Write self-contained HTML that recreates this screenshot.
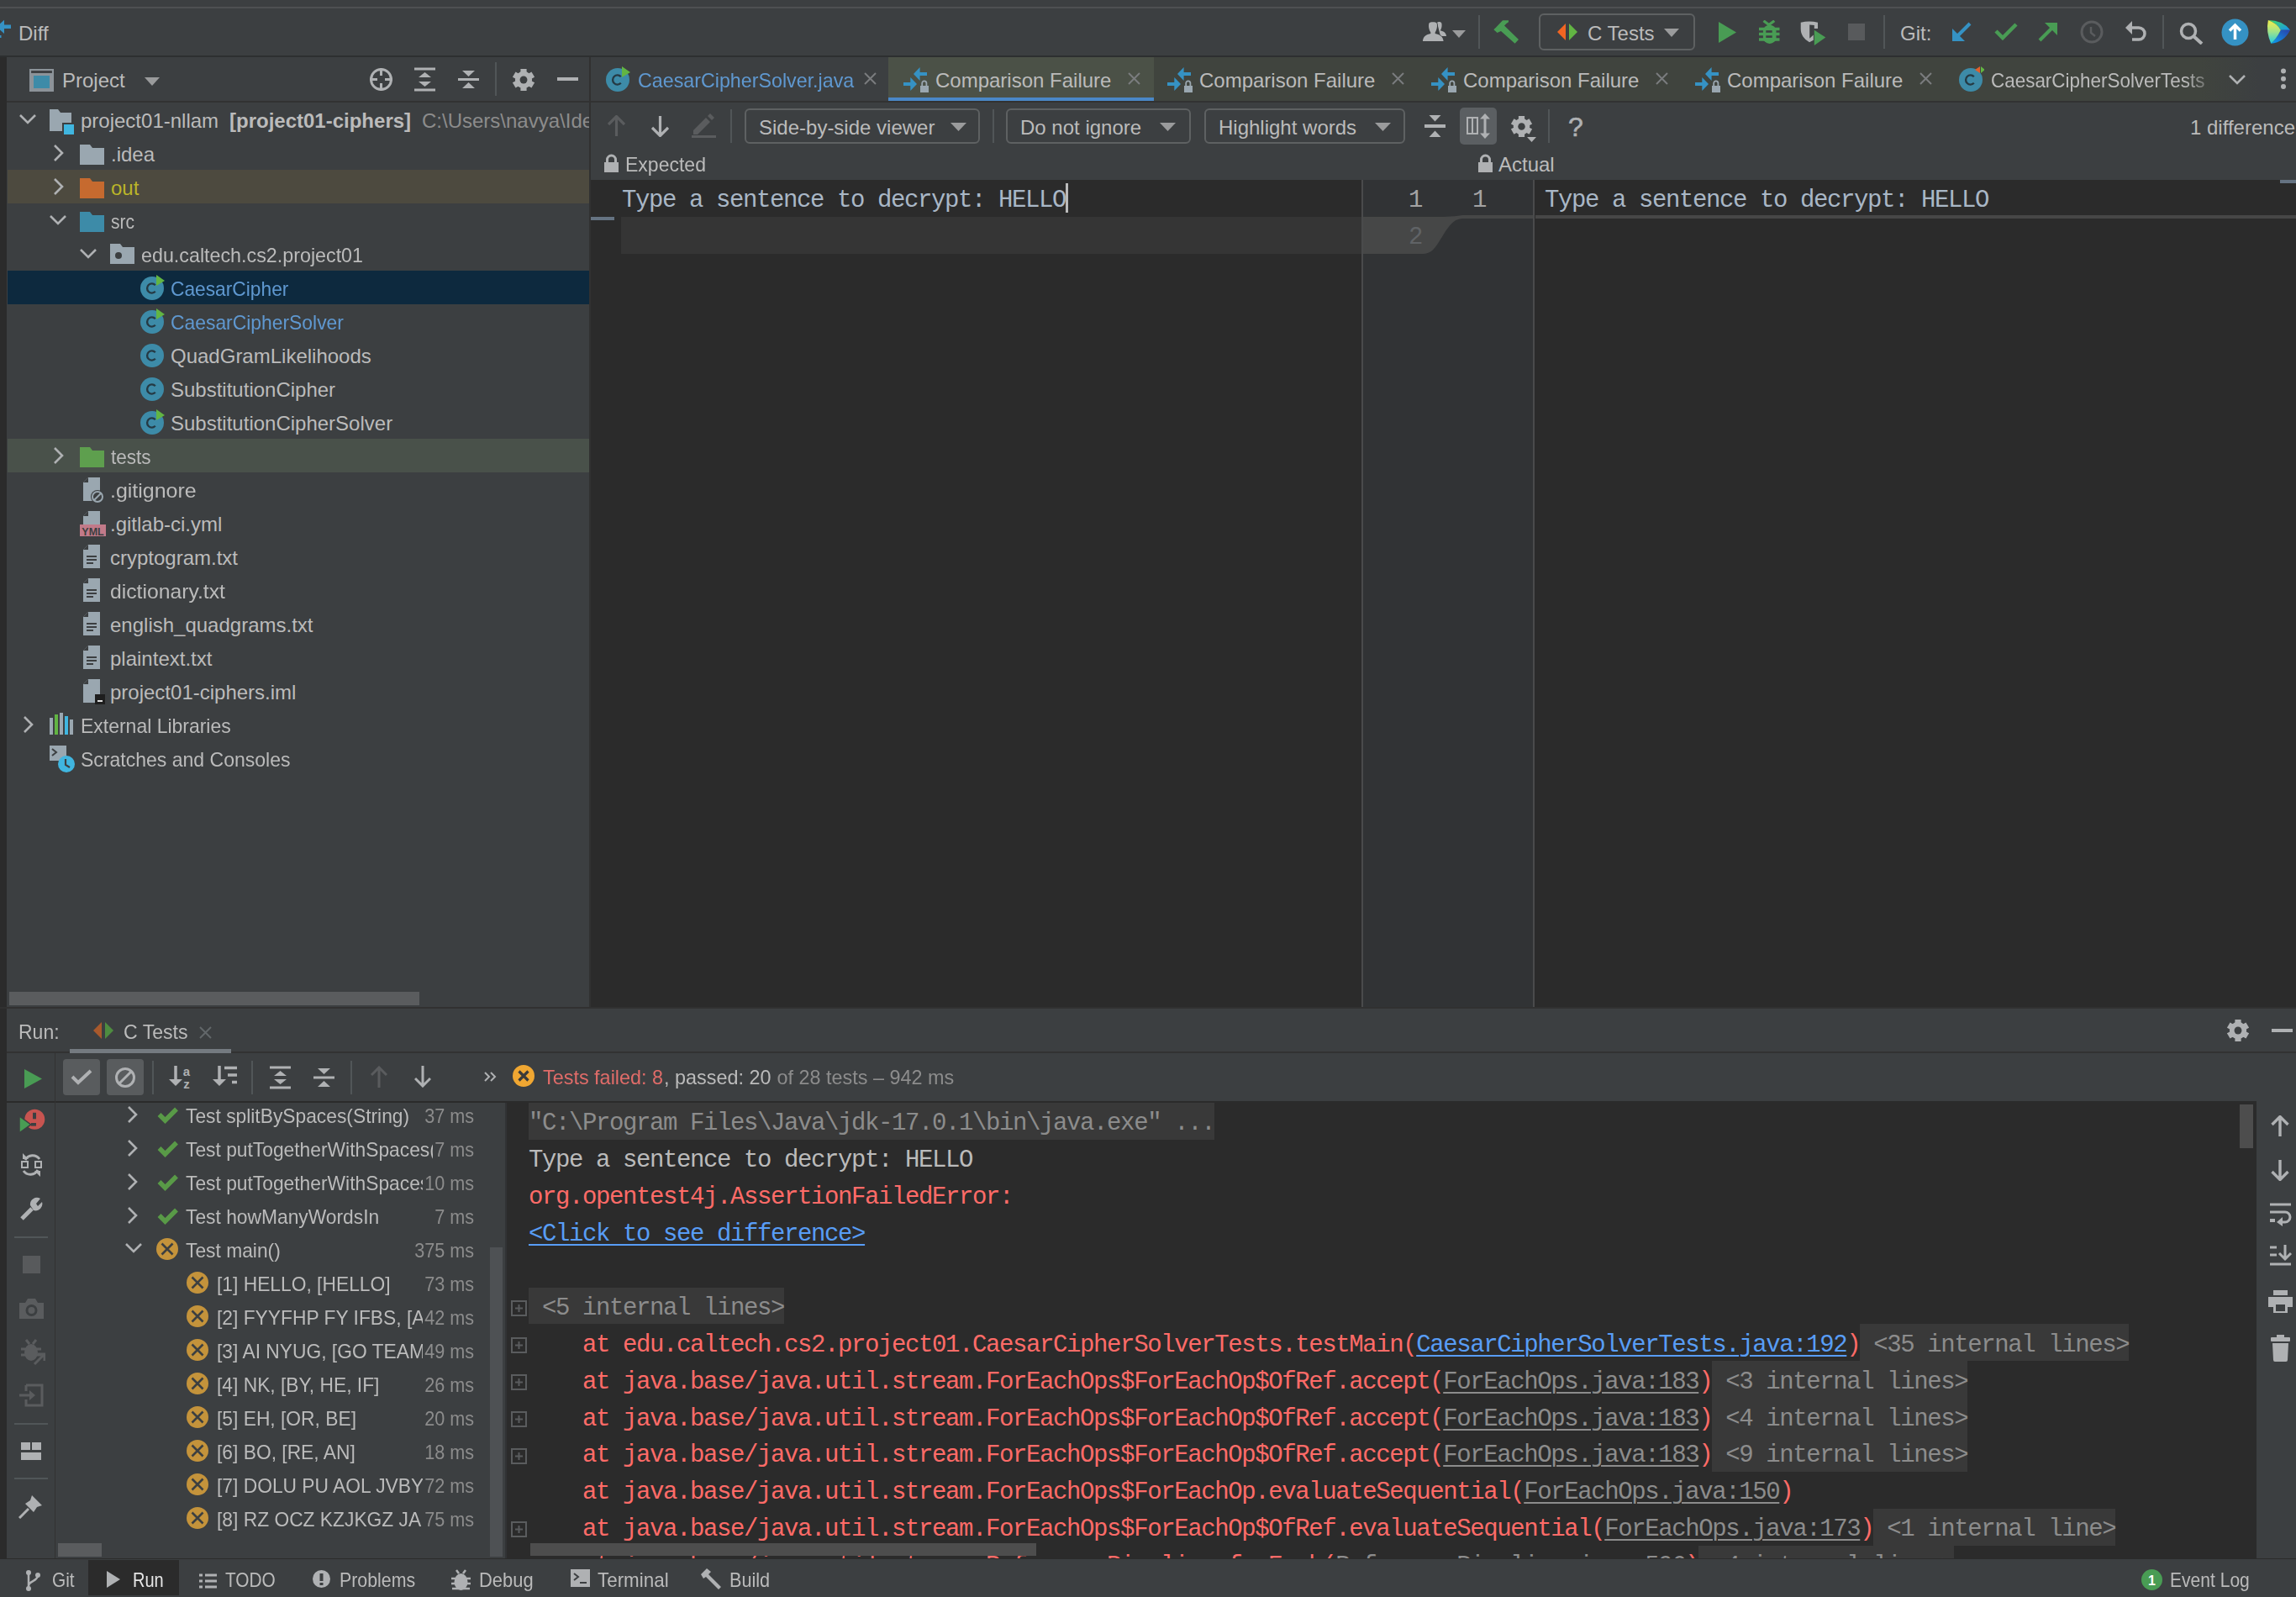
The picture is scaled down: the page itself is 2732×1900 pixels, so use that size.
<!DOCTYPE html><html><head><meta charset="utf-8"><style>
html,body{margin:0;padding:0;width:2732px;height:1900px;overflow:hidden;background:#3c3f41}
.a{position:absolute;display:block}
.t{position:absolute;white-space:pre;line-height:1;font-family:"Liberation Sans",sans-serif}
.m{font-family:"Liberation Mono",monospace}
u{text-decoration:underline;text-underline-offset:5px;text-decoration-thickness:2px}
</style></head><body>
<div class="a" style="left:0px;top:0px;width:2732px;height:66px;background:#3c3f41;"></div>
<div class="a" style="left:0px;top:8px;width:2732px;height:2px;background:#4e5052;"></div>
<div class="a" style="left:0px;top:66px;width:2732px;height:2px;background:#2d2f30;"></div>
<svg class="a" style="left:0px;top:20px;" width="14" height="26" viewBox="0 0 14 26"><path d="M-4 12 L5 3.75 V9.5 H13 V14 H5 V20 Z" fill="#3592c4"/><rect x="0" y="22" width="1.5" height="3" fill="#3592c4"/></svg>
<div class="t" style="left:22px;top:28px;font-size:24px;color:#bbbbbb;font-family:'Liberation Sans', sans-serif;">Diff</div>
<svg class="a" style="left:1692px;top:25px;" width="30" height="25" viewBox="0 0 30 25"><path d="M18 2 C19 0.5 22.5 0.5 23.3 2.5 C24 5 23.5 9 21.8 11.2 C26 12.2 28.8 14 29 17.9 H22 Z" fill="#afb1b3"/><path d="M8.5 2.5 C9.5 0.8 16.5 0.8 17.5 2.5 C18.5 5 18 10 15.8 13.2 L15.6 15 C21 16.3 25 18 25.6 23.9 H0.9 C1.5 18 5 16.3 10.4 15 L10.2 13.2 C8 10 7.5 5 8.5 2.5 Z" fill="#afb1b3" stroke="#3c3f41" stroke-width="1.5" paint-order="stroke"/></svg>
<svg class="a" style="left:1728px;top:36px;" width="16" height="9" viewBox="0 0 16 9"><path d="M0 0 H16 L8.0 9 Z" fill="#9a9b9c"/></svg>
<div class="a" style="left:1759px;top:18px;width:2px;height:40px;background:#515658;"></div>
<svg class="a" style="left:1776px;top:23px;" width="33" height="30" viewBox="0 0 33 30"><path d="M1.4 12.3 L12 1.2 H19 V3.3 Q16.5 4.5 14 7.5 L31 24 L26.6 28.7 L10 14 L5.5 16 Z" fill="#499c54"/></svg>
<div class="a" style="left:1831px;top:16px;width:182px;height:40px;border:2px solid #5e6162;border-radius:6px"></div>
<svg class="a" style="left:1853px;top:28px;" width="25" height="20" viewBox="0 0 25 20"><path d="M10 0 L0 10 L10 20 Z" fill="#f26522"/><path d="M14 0 L24 10 L14 20 Z" fill="#62b543"/></svg>
<div class="t" style="left:1889px;top:28px;font-size:24px;color:#bbbbbb;font-family:'Liberation Sans', sans-serif;">C Tests</div>
<svg class="a" style="left:1980px;top:34px;" width="18" height="10" viewBox="0 0 18 10"><path d="M0 0 H18 L9.0 10 Z" fill="#9a9b9c"/></svg>
<svg class="a" style="left:2045px;top:26px;" width="21" height="25" viewBox="0 0 21 25"><path d="M0 0 L21 12.5 L0 25 Z" fill="#499c54"/></svg>
<svg class="a" style="left:2093px;top:24px;" width="25" height="28" viewBox="0 0 25 28"><path d="M5.5 0.8 L11.8 5.5 L18.3 0.8" fill="none" stroke="#499c54" stroke-width="3.2"/><rect x="4.9" y="5.7" width="15.6" height="22.2" rx="7.8" ry="7" fill="#499c54"/><path d="M0 10.45 H24.5 M0 16.55 H24.5 M0 23.1 H24.5" stroke="#499c54" stroke-width="3.5"/><rect x="8.3" y="12.2" width="7.4" height="2.6" fill="#3c3f41"/><rect x="8.3" y="18.3" width="7.4" height="2.6" fill="#3c3f41"/></svg>
<svg class="a" style="left:2142px;top:25px;" width="32" height="30" viewBox="0 0 32 30"><path d="M0.7 1.8 Q11 -1 21 1.8 V9 H16.8 V5.1 L11.2 4.4 V20.8 L15.8 16.5 V22.8 L11 25.2 C4 21 0.7 16 0.7 9 Z" fill="#afb1b3"/><path d="M16.8 10.8 L30.3 19.5 L16.8 29 Z" fill="#499c54"/></svg>
<div class="a" style="left:2199px;top:28px;width:20px;height:20px;background:#585a5c;"></div>
<div class="a" style="left:2241px;top:18px;width:2px;height:40px;background:#515658;"></div>
<div class="t" style="left:2261px;top:28px;font-size:24px;color:#bbbbbb;font-family:'Liberation Sans', sans-serif;">Git:</div>
<svg class="a" style="left:2322px;top:26px;" width="24" height="24" viewBox="0 0 24 24"><path d="M22 2 L4 20" stroke="#3592c4" stroke-width="4"/><path d="M1 8 V23 H16 Z" fill="#3592c4"/></svg>
<svg class="a" style="left:2373px;top:26px;" width="28" height="22" viewBox="0 0 28 22"><path d="M2 11 L10 19 L26 3" fill="none" stroke="#499c54" stroke-width="4.5"/></svg>
<svg class="a" style="left:2425px;top:26px;" width="24" height="24" viewBox="0 0 24 24"><path d="M2 22 L20 4" stroke="#499c54" stroke-width="4"/><path d="M8 1 H23 V16 Z" fill="#499c54"/></svg>
<svg class="a" style="left:2475px;top:24px;" width="28" height="28" viewBox="0 0 28 28"><circle cx="14" cy="14" r="12" fill="none" stroke="#5a5c5e" stroke-width="3"/><path d="M13 8 V15 L18 19" fill="none" stroke="#5a5c5e" stroke-width="2.5"/></svg>
<svg class="a" style="left:2529px;top:24px;" width="27" height="27" viewBox="0 0 27 27"><path d="M6 9 H16 A7 7 0 0 1 16 23 H8" fill="none" stroke="#afb1b3" stroke-width="3.5"/><path d="M0 9 L8 1 V17 Z" fill="#afb1b3"/></svg>
<div class="a" style="left:2573px;top:18px;width:2px;height:40px;background:#515658;"></div>
<svg class="a" style="left:2593px;top:26px;" width="29" height="27" viewBox="0 0 29 27"><circle cx="11" cy="11" r="8.5" fill="none" stroke="#afb1b3" stroke-width="3.5"/><path d="M17 17 L27 26" stroke="#afb1b3" stroke-width="4"/></svg>
<svg class="a" style="left:2643px;top:22px;" width="33" height="33" viewBox="0 0 33 33"><circle cx="16.5" cy="16.5" r="16" fill="#3592c4"/><path d="M16.5 8 V25 M10 14.5 L16.5 8 L23 14.5" fill="none" stroke="#fff" stroke-width="3.5"/></svg>
<svg class="a" style="left:2696px;top:22px;" width="36" height="32" viewBox="0 0 36 32"><defs><linearGradient id="tl" x1="0" y1="0" x2="0" y2="1"><stop offset="0" stop-color="#f5ef4a"/><stop offset=".5" stop-color="#9fe38a"/><stop offset="1" stop-color="#1fcbe6"/></linearGradient><linearGradient id="tt" x1="0" y1="0" x2="1" y2="1"><stop offset="0" stop-color="#3fe060"/><stop offset="1" stop-color="#1891f0"/></linearGradient><linearGradient id="tb2" x1="0" y1="1" x2="1" y2="0"><stop offset="0" stop-color="#0aa0f0"/><stop offset="1" stop-color="#2a3fa8"/></linearGradient></defs><path d="M2.9 2 Q20 2 29.1 13.7 H17.8 Q14 6 2.9 2 Z" fill="url(#tt)"/><path d="M29.1 13.7 Q22 28 6.3 29.8 Q13 24 17.8 13.7 Z" fill="url(#tb2)"/><path d="M2.9 2 Q14 6 17.8 13.7 Q13 24 6.3 29.8 Q0 16 2.9 2 Z" fill="url(#tl)"/></svg>
<div class="a" style="left:0px;top:68px;width:8px;height:1787px;background:#2b2b2b;"></div>
<div class="a" style="left:8px;top:68px;width:694px;height:1130px;background:#3c3f41;"></div>
<div class="a" style="left:8px;top:120px;width:694px;height:2px;background:#323232;"></div>
<svg class="a" style="left:35px;top:82px;" width="29" height="27" viewBox="0 0 29 27"><rect x="1" y="1" width="27" height="25" fill="none" stroke="#8c9399" stroke-width="2.2"/><rect x="2" y="5" width="25" height="21" fill="#8c9399"/><rect x="5" y="8" width="19" height="15" fill="#3d8ba8"/></svg>
<div class="t" style="left:74px;top:84px;font-size:24px;color:#bbbbbb;font-family:'Liberation Sans', sans-serif;">Project</div>
<svg class="a" style="left:172px;top:92px;" width="18" height="10" viewBox="0 0 18 10"><path d="M0 0 H18 L9.0 10 Z" fill="#9a9b9c"/></svg>
<svg class="a" style="left:439px;top:80px;" width="29" height="29" viewBox="0 0 29 29"><circle cx="14.5" cy="14.5" r="12" fill="none" stroke="#afb1b3" stroke-width="3"/><path d="M14.5 1 V10 M14.5 19 V28 M1 14.5 H10 M19 14.5 H28" stroke="#afb1b3" stroke-width="3"/></svg>
<svg class="a" style="left:493px;top:80px;" width="25" height="29" viewBox="0 0 25 29"><path d="M0 2 H25 M0 27 H25" stroke="#afb1b3" stroke-width="3"/><path d="M12.5 6 L20 12 H5 Z M12.5 23 L20 17 H5 Z" fill="#afb1b3"/></svg>
<svg class="a" style="left:545px;top:80px;" width="25" height="29" viewBox="0 0 25 29"><path d="M0 14.5 H25" stroke="#afb1b3" stroke-width="3"/><path d="M12.5 11 L20 4 H5 Z M12.5 18 L20 25 H5 Z" fill="#afb1b3"/></svg>
<div class="a" style="left:589px;top:74px;width:2px;height:40px;background:#515658;"></div>
<svg class="a" style="left:610px;top:82px;" width="26" height="26" viewBox="0 0 26 26"><rect x="9.40" y="0" width="7.2" height="13.00" fill="#afb1b3" transform="rotate(0 13.0 13.0)"/><rect x="9.40" y="0" width="7.2" height="13.00" fill="#afb1b3" transform="rotate(60 13.0 13.0)"/><rect x="9.40" y="0" width="7.2" height="13.00" fill="#afb1b3" transform="rotate(120 13.0 13.0)"/><rect x="9.40" y="0" width="7.2" height="13.00" fill="#afb1b3" transform="rotate(180 13.0 13.0)"/><rect x="9.40" y="0" width="7.2" height="13.00" fill="#afb1b3" transform="rotate(240 13.0 13.0)"/><rect x="9.40" y="0" width="7.2" height="13.00" fill="#afb1b3" transform="rotate(300 13.0 13.0)"/><circle cx="13.0" cy="13.0" r="10.14" fill="#afb1b3"/><circle cx="13.0" cy="13.0" r="4.42" fill="#3c3f41"/></svg>
<div class="a" style="left:663px;top:92px;width:25px;height:4px;background:#afb1b3;"></div>
<svg class="a" style="left:23px;top:135px;" width="20" height="14" viewBox="0 0 20 14"><path d="M1 2 L10 11 L19 2" fill="none" stroke="#afb1b3" stroke-width="2.6"/></svg>
<svg class="a" style="left:59px;top:130px;" width="30" height="30" viewBox="0 0 30 30"><path d="M0 0 H10 L13 4 H26 V26 H0 Z" fill="#9aa7b0"/><rect x="15" y="16" width="15" height="14" fill="#3c3f41"/><rect x="17" y="18" width="12" height="12" fill="#40b6e0"/></svg>
<div class="t" style="left:96px;top:132px;font-size:24px;color:#bbbbbb;font-family:'Liberation Sans', sans-serif;">project01-nllam </div>
<div class="t" style="left:273px;top:132px;font-size:24px;color:#bbbbbb;font-family:'Liberation Sans', sans-serif;font-weight:bold">[project01-ciphers]</div>
<div class="t" style="left:502px;top:132px;font-size:24px;color:#8c8c8c;font-family:'Liberation Sans', sans-serif;">C:\Users\navya\Ide</div>
<svg class="a" style="left:63px;top:172px;" width="14" height="20" viewBox="0 0 14 20"><path d="M2 1 L11 10 L2 19" fill="none" stroke="#afb1b3" stroke-width="2.6"/></svg>
<svg class="a" style="left:95px;top:172px;" width="30" height="24" viewBox="0 0 30 24"><path d="M0 0 H12 L15 4 H29 V24 H0 Z" fill="#9aa7b0"/></svg>
<div class="t" style="left:132px;top:172px;font-size:24px;color:#bbbbbb;font-family:'Liberation Sans', sans-serif;">.idea</div>
<div class="a" style="left:9px;top:202px;width:693px;height:40px;background:#4d4a3f;"></div>
<svg class="a" style="left:63px;top:212px;" width="14" height="20" viewBox="0 0 14 20"><path d="M2 1 L11 10 L2 19" fill="none" stroke="#afb1b3" stroke-width="2.6"/></svg>
<svg class="a" style="left:95px;top:212px;" width="30" height="24" viewBox="0 0 30 24"><path d="M0 0 H12 L15 4 H29 V24 H0 Z" fill="#c66a2f"/></svg>
<div class="t" style="left:132px;top:212px;font-size:24px;color:#bbb529;font-family:'Liberation Sans', sans-serif;">out</div>
<svg class="a" style="left:59px;top:255px;" width="20" height="14" viewBox="0 0 20 14"><path d="M1 2 L10 11 L19 2" fill="none" stroke="#afb1b3" stroke-width="2.6"/></svg>
<svg class="a" style="left:95px;top:252px;" width="30" height="24" viewBox="0 0 30 24"><path d="M0 0 H12 L15 4 H29 V24 H0 Z" fill="#3d8ba8"/></svg>
<div class="t" style="left:132px;top:252px;font-size:24px;color:#bbbbbb;font-family:'Liberation Sans', sans-serif;transform:scaleX(0.875);transform-origin:0 0;">src</div>
<svg class="a" style="left:95px;top:295px;" width="20" height="14" viewBox="0 0 20 14"><path d="M1 2 L10 11 L19 2" fill="none" stroke="#afb1b3" stroke-width="2.6"/></svg>
<svg class="a" style="left:131px;top:290px;" width="30" height="24" viewBox="0 0 30 24"><path d="M0 0 H12 L15 4 H29 V24 H0 Z" fill="#9aa7b0"/><circle cx="10" cy="14" r="4" fill="#3c3f41"/></svg>
<div class="t" style="left:168px;top:292px;font-size:24px;color:#bbbbbb;font-family:'Liberation Sans', sans-serif;transform:scaleX(0.97);transform-origin:0 0;">edu.caltech.cs2.project01</div>
<div class="a" style="left:9px;top:322px;width:693px;height:40px;background:#0d293e;"></div>
<svg class="a" style="left:167px;top:327px;" width="30" height="30" viewBox="0 0 30 30"><circle cx="14" cy="16" r="14" fill="#3d8ba8"/><path d="M17.8 12.2 A5.6 5.6 0 1 0 17.8 19.8" fill="none" stroke="#253a44" stroke-width="2.4"/><path d="M19 0 L29 7 L19 13 Z" fill="#62b543"/></svg>
<div class="t" style="left:203px;top:332px;font-size:24px;color:#5f98d0;font-family:'Liberation Sans', sans-serif;transform:scaleX(0.948);transform-origin:0 0;">CaesarCipher</div>
<svg class="a" style="left:167px;top:367px;" width="30" height="30" viewBox="0 0 30 30"><circle cx="14" cy="16" r="14" fill="#3d8ba8"/><path d="M17.8 12.2 A5.6 5.6 0 1 0 17.8 19.8" fill="none" stroke="#253a44" stroke-width="2.4"/><path d="M19 0 L29 7 L19 13 Z" fill="#62b543"/></svg>
<div class="t" style="left:203px;top:372px;font-size:24px;color:#5f98d0;font-family:'Liberation Sans', sans-serif;transform:scaleX(0.953);transform-origin:0 0;">CaesarCipherSolver</div>
<svg class="a" style="left:167px;top:407px;" width="30" height="30" viewBox="0 0 30 30"><circle cx="14" cy="16" r="14" fill="#3d8ba8"/><path d="M17.8 12.2 A5.6 5.6 0 1 0 17.8 19.8" fill="none" stroke="#253a44" stroke-width="2.4"/></svg>
<div class="t" style="left:203px;top:412px;font-size:24px;color:#bbbbbb;font-family:'Liberation Sans', sans-serif;">QuadGramLikelihoods</div>
<svg class="a" style="left:167px;top:447px;" width="30" height="30" viewBox="0 0 30 30"><circle cx="14" cy="16" r="14" fill="#3d8ba8"/><path d="M17.8 12.2 A5.6 5.6 0 1 0 17.8 19.8" fill="none" stroke="#253a44" stroke-width="2.4"/></svg>
<div class="t" style="left:203px;top:452px;font-size:24px;color:#bbbbbb;font-family:'Liberation Sans', sans-serif;">SubstitutionCipher</div>
<svg class="a" style="left:167px;top:487px;" width="30" height="30" viewBox="0 0 30 30"><circle cx="14" cy="16" r="14" fill="#3d8ba8"/><path d="M17.8 12.2 A5.6 5.6 0 1 0 17.8 19.8" fill="none" stroke="#253a44" stroke-width="2.4"/><path d="M19 0 L29 7 L19 13 Z" fill="#62b543"/></svg>
<div class="t" style="left:203px;top:492px;font-size:24px;color:#bbbbbb;font-family:'Liberation Sans', sans-serif;">SubstitutionCipherSolver</div>
<div class="a" style="left:9px;top:522px;width:693px;height:40px;background:#49514a;"></div>
<svg class="a" style="left:63px;top:532px;" width="14" height="20" viewBox="0 0 14 20"><path d="M2 1 L11 10 L2 19" fill="none" stroke="#afb1b3" stroke-width="2.6"/></svg>
<svg class="a" style="left:95px;top:532px;" width="30" height="24" viewBox="0 0 30 24"><path d="M0 0 H12 L15 4 H29 V24 H0 Z" fill="#5e9f4e"/></svg>
<div class="t" style="left:132px;top:532px;font-size:24px;color:#bbbbbb;font-family:'Liberation Sans', sans-serif;transform:scaleX(0.94);transform-origin:0 0;">tests</div>
<svg class="a" style="left:99px;top:568px;" width="26" height="30" viewBox="0 0 26 30"><path d="M6 0 H20 V28 H0 V6 Z" fill="#9aa7b0"/><path d="M0 6 L6 0 V6 Z" fill="#3c3f41"/><circle cx="17" cy="23" r="8" fill="#3c3f41"/><circle cx="17" cy="23" r="6" fill="none" stroke="#9aa7b0" stroke-width="2"/><path d="M13 27 L21 19" stroke="#9aa7b0" stroke-width="2"/></svg>
<div class="t" style="left:131px;top:572px;font-size:24px;color:#bbbbbb;font-family:'Liberation Sans', sans-serif;transform:scaleX(1.04);transform-origin:0 0;">.gitignore</div>
<svg class="a" style="left:95px;top:608px;" width="32" height="30" viewBox="0 0 32 30"><path d="M10 0 H24 V20 H4 V6 Z" fill="#9aa7b0"/><path d="M4 6 L10 0 V6 Z" fill="#3c3f41"/><rect x="0" y="16" width="31" height="14" fill="#c27a89"/><text x="15.5" y="28.5" font-family="Liberation Sans" font-size="12.5" font-weight="bold" text-anchor="middle" fill="#3c3f41">YML</text></svg>
<div class="t" style="left:131px;top:612px;font-size:24px;color:#bbbbbb;font-family:'Liberation Sans', sans-serif;">.gitlab-ci.yml</div>
<svg class="a" style="left:99px;top:648px;" width="22" height="30" viewBox="0 0 22 30"><path d="M6 0 H20 V28 H0 V6 Z" fill="#9aa7b0"/><path d="M0 6 L6 0 V6 Z" fill="#3c3f41"/><path d="M4 14 H16 M4 18 H16 M4 22 H12" stroke="#3c3f41" stroke-width="2"/></svg>
<div class="t" style="left:131px;top:652px;font-size:24px;color:#bbbbbb;font-family:'Liberation Sans', sans-serif;">cryptogram.txt</div>
<svg class="a" style="left:99px;top:688px;" width="22" height="30" viewBox="0 0 22 30"><path d="M6 0 H20 V28 H0 V6 Z" fill="#9aa7b0"/><path d="M0 6 L6 0 V6 Z" fill="#3c3f41"/><path d="M4 14 H16 M4 18 H16 M4 22 H12" stroke="#3c3f41" stroke-width="2"/></svg>
<div class="t" style="left:131px;top:692px;font-size:24px;color:#bbbbbb;font-family:'Liberation Sans', sans-serif;transform:scaleX(1.03);transform-origin:0 0;">dictionary.txt</div>
<svg class="a" style="left:99px;top:728px;" width="22" height="30" viewBox="0 0 22 30"><path d="M6 0 H20 V28 H0 V6 Z" fill="#9aa7b0"/><path d="M0 6 L6 0 V6 Z" fill="#3c3f41"/><path d="M4 14 H16 M4 18 H16 M4 22 H12" stroke="#3c3f41" stroke-width="2"/></svg>
<div class="t" style="left:131px;top:732px;font-size:24px;color:#bbbbbb;font-family:'Liberation Sans', sans-serif;">english_quadgrams.txt</div>
<svg class="a" style="left:99px;top:768px;" width="22" height="30" viewBox="0 0 22 30"><path d="M6 0 H20 V28 H0 V6 Z" fill="#9aa7b0"/><path d="M0 6 L6 0 V6 Z" fill="#3c3f41"/><path d="M4 14 H16 M4 18 H16 M4 22 H12" stroke="#3c3f41" stroke-width="2"/></svg>
<div class="t" style="left:131px;top:772px;font-size:24px;color:#bbbbbb;font-family:'Liberation Sans', sans-serif;">plaintext.txt</div>
<svg class="a" style="left:99px;top:808px;" width="26" height="30" viewBox="0 0 26 30"><path d="M6 0 H20 V28 H0 V6 Z" fill="#9aa7b0"/><path d="M0 6 L6 0 V6 Z" fill="#3c3f41"/><rect x="14" y="18" width="12" height="12" fill="#1e1e1e"/><rect x="17" y="25" width="6" height="2" fill="#ddd"/></svg>
<div class="t" style="left:131px;top:812px;font-size:24px;color:#bbbbbb;font-family:'Liberation Sans', sans-serif;">project01-ciphers.iml</div>
<svg class="a" style="left:27px;top:852px;" width="14" height="20" viewBox="0 0 14 20"><path d="M2 1 L11 10 L2 19" fill="none" stroke="#afb1b3" stroke-width="2.6"/></svg>
<svg class="a" style="left:59px;top:848px;" width="29" height="26" viewBox="0 0 29 26"><rect x="0" y="6" width="4" height="20" fill="#9aa7b0"/><rect x="6" y="2" width="4" height="24" fill="#62b543"/><rect x="12" y="0" width="4" height="26" fill="#9aa7b0"/><rect x="18" y="4" width="4" height="22" fill="#40b6e0"/><rect x="24" y="8" width="4" height="18" fill="#9aa7b0"/></svg>
<div class="t" style="left:96px;top:852px;font-size:24px;color:#bbbbbb;font-family:'Liberation Sans', sans-serif;transform:scaleX(0.957);transform-origin:0 0;">External Libraries</div>
<svg class="a" style="left:59px;top:887px;" width="30" height="32" viewBox="0 0 30 32"><rect x="0" y="0" width="20" height="18" fill="#9aa7b0"/><path d="M3 4 L8 8 L3 12" fill="none" stroke="#3c3f41" stroke-width="2"/><circle cx="20" cy="22" r="10" fill="#40b6e0"/><path d="M19 16 V23 L24 26" fill="none" stroke="#3c3f41" stroke-width="2.2"/></svg>
<div class="t" style="left:96px;top:892px;font-size:24px;color:#bbbbbb;font-family:'Liberation Sans', sans-serif;transform:scaleX(0.959);transform-origin:0 0;">Scratches and Consoles</div>
<div class="a" style="left:11px;top:1180px;width:488px;height:16px;background:#5a5c5e;"></div>
<div class="a" style="left:703px;top:68px;width:2029px;height:53px;background:#3c3f41;"></div>
<div class="a" style="left:1057px;top:68px;width:316px;height:53px;background:#4b5147;"></div>
<div class="a" style="left:1373px;top:68px;width:1245px;height:53px;background:#40443e;"></div>
<div class="a" style="left:2618px;top:68px;width:70px;height:53px;background:linear-gradient(90deg,#40443e,#3c3f41)"></div>
<div class="a" style="left:1057px;top:116px;width:316px;height:5px;background:#4a88c7;"></div>
<div class="a" style="left:703px;top:120px;width:2029px;height:2px;background:#323232;"></div>
<svg class="a" style="left:721px;top:79px;" width="30" height="30" viewBox="0 0 30 30"><circle cx="14" cy="16" r="14" fill="#3d8ba8"/><path d="M17.8 12.2 A5.6 5.6 0 1 0 17.8 19.8" fill="none" stroke="#253a44" stroke-width="2.4"/><path d="M19 0 L29 7 L19 13 Z" fill="#62b543"/></svg>
<div class="t" style="left:759px;top:84px;font-size:24px;color:#5f98d0;font-family:'Liberation Sans', sans-serif;transform:scaleX(0.969);transform-origin:0 0;">CaesarCipherSolver.java</div>
<svg class="a" style="left:1028px;top:86px;" width="15" height="15" viewBox="0 0 15 15"><path d="M1 1 L14 14 M14 1 L1 14" stroke="#7a7c7e" stroke-width="2"/></svg>
<svg class="a" style="left:1075px;top:80px;" width="30" height="30" viewBox="0 0 30 30"><path d="M12 8 L19.6 0 V6 H28 V10 H19.6 V16 Z" fill="#3592c4"/><path d="M16 20 L8.3 12 V18 H0 V22 H8.3 V28 Z" fill="#3592c4"/><rect x="20" y="22" width="10" height="8" fill="#9aa7b0"/><path d="M22.2 22 V19 A2.6 2.6 0 0 1 27.4 19 V22" fill="none" stroke="#9aa7b0" stroke-width="1.8"/></svg>
<div class="t" style="left:1113px;top:84px;font-size:24px;color:#bbbbbb;font-family:'Liberation Sans', sans-serif;">Comparison Failure</div>
<svg class="a" style="left:1342px;top:86px;" width="15" height="15" viewBox="0 0 15 15"><path d="M1 1 L14 14 M14 1 L1 14" stroke="#7a7c7e" stroke-width="2"/></svg>
<svg class="a" style="left:1389px;top:80px;" width="30" height="30" viewBox="0 0 30 30"><path d="M12 8 L19.6 0 V6 H28 V10 H19.6 V16 Z" fill="#3592c4"/><path d="M16 20 L8.3 12 V18 H0 V22 H8.3 V28 Z" fill="#3592c4"/><rect x="20" y="22" width="10" height="8" fill="#9aa7b0"/><path d="M22.2 22 V19 A2.6 2.6 0 0 1 27.4 19 V22" fill="none" stroke="#9aa7b0" stroke-width="1.8"/></svg>
<div class="t" style="left:1427px;top:84px;font-size:24px;color:#bbbbbb;font-family:'Liberation Sans', sans-serif;">Comparison Failure</div>
<svg class="a" style="left:1656px;top:86px;" width="15" height="15" viewBox="0 0 15 15"><path d="M1 1 L14 14 M14 1 L1 14" stroke="#7a7c7e" stroke-width="2"/></svg>
<svg class="a" style="left:1703px;top:80px;" width="30" height="30" viewBox="0 0 30 30"><path d="M12 8 L19.6 0 V6 H28 V10 H19.6 V16 Z" fill="#3592c4"/><path d="M16 20 L8.3 12 V18 H0 V22 H8.3 V28 Z" fill="#3592c4"/><rect x="20" y="22" width="10" height="8" fill="#9aa7b0"/><path d="M22.2 22 V19 A2.6 2.6 0 0 1 27.4 19 V22" fill="none" stroke="#9aa7b0" stroke-width="1.8"/></svg>
<div class="t" style="left:1741px;top:84px;font-size:24px;color:#bbbbbb;font-family:'Liberation Sans', sans-serif;">Comparison Failure</div>
<svg class="a" style="left:1970px;top:86px;" width="15" height="15" viewBox="0 0 15 15"><path d="M1 1 L14 14 M14 1 L1 14" stroke="#7a7c7e" stroke-width="2"/></svg>
<svg class="a" style="left:2017px;top:80px;" width="30" height="30" viewBox="0 0 30 30"><path d="M12 8 L19.6 0 V6 H28 V10 H19.6 V16 Z" fill="#3592c4"/><path d="M16 20 L8.3 12 V18 H0 V22 H8.3 V28 Z" fill="#3592c4"/><rect x="20" y="22" width="10" height="8" fill="#9aa7b0"/><path d="M22.2 22 V19 A2.6 2.6 0 0 1 27.4 19 V22" fill="none" stroke="#9aa7b0" stroke-width="1.8"/></svg>
<div class="t" style="left:2055px;top:84px;font-size:24px;color:#bbbbbb;font-family:'Liberation Sans', sans-serif;">Comparison Failure</div>
<svg class="a" style="left:2284px;top:86px;" width="15" height="15" viewBox="0 0 15 15"><path d="M1 1 L14 14 M14 1 L1 14" stroke="#7a7c7e" stroke-width="2"/></svg>
<svg class="a" style="left:2331px;top:79px;" width="30" height="30" viewBox="0 0 30 30"><circle cx="14" cy="16" r="14" fill="#3d8ba8"/><path d="M17.8 12.2 A5.6 5.6 0 1 0 17.8 19.8" fill="none" stroke="#253a44" stroke-width="2.4"/><path d="M19 4 L25 0 V8 Z" fill="#e2602a"/><path d="M26 0 L31 4 L26 8 Z" fill="#62b543"/></svg>
<div class="a" style="left:2369px;top:80px;width:262px;height:34px;overflow:hidden;-webkit-mask-image:linear-gradient(90deg,#000 88%,rgba(0,0,0,0.25))"><div class="t" style="left:0;top:4px;font-size:24px;color:#bbbbbb;transform:scaleX(0.935);transform-origin:0 0">CaesarCipherSolverTests</div></div>
<svg class="a" style="left:2652px;top:88px;" width="20" height="14" viewBox="0 0 20 14"><path d="M1 2 L10 11 L19 2" fill="none" stroke="#afb1b3" stroke-width="2.6"/></svg>
<svg class="a" style="left:2712px;top:80px;" width="10" height="28" viewBox="0 0 10 28"><circle cx="5" cy="4.5" r="3" fill="#afb1b3"/><circle cx="5" cy="13.8" r="3" fill="#afb1b3"/><circle cx="5" cy="23.1" r="3" fill="#afb1b3"/></svg>
<div class="a" style="left:703px;top:122px;width:2029px;height:92px;background:#3c3f41;"></div>
<svg class="a" style="left:723px;top:137px;" width="21" height="25" viewBox="0 0 21 25"><path d="M10.5 3 V25 M1 11 L10.5 1.5 L20 11" fill="none" stroke="#5a5c5e" stroke-width="3.2"/></svg>
<svg class="a" style="left:775px;top:138px;" width="21" height="25" viewBox="0 0 21 25"><path d="M10.5 0 V22 M1 14 L10.5 23.5 L20 14" fill="none" stroke="#afb1b3" stroke-width="3.2"/></svg>
<svg class="a" style="left:823px;top:135px;" width="29" height="29" viewBox="0 0 29 29"><path d="M2 20 L17 5 L22 10 L7 25 H2 Z M19 3 L22 0 L27 5 L24 8 Z" fill="#5a5c5e"/><rect x="0" y="26" width="29" height="3" fill="#5a5c5e"/></svg>
<div class="a" style="left:869px;top:130px;width:2px;height:40px;background:#515658;"></div>
<div class="a" style="left:886px;top:129px;width:276px;height:38px;border:2px solid #5e6162;border-radius:6px"></div>
<div class="t" style="left:903px;top:140px;font-size:24px;color:#bbbbbb;font-family:'Liberation Sans', sans-serif;">Side-by-side viewer</div>
<svg class="a" style="left:1131px;top:146px;" width="19" height="10" viewBox="0 0 19 10"><path d="M0 0 H19 L9.5 10 Z" fill="#9a9b9c"/></svg>
<div class="a" style="left:1197px;top:129px;width:216px;height:38px;border:2px solid #5e6162;border-radius:6px"></div>
<div class="t" style="left:1214px;top:140px;font-size:24px;color:#bbbbbb;font-family:'Liberation Sans', sans-serif;">Do not ignore</div>
<svg class="a" style="left:1380px;top:146px;" width="19" height="10" viewBox="0 0 19 10"><path d="M0 0 H19 L9.5 10 Z" fill="#9a9b9c"/></svg>
<div class="a" style="left:1433px;top:129px;width:235px;height:38px;border:2px solid #5e6162;border-radius:6px"></div>
<div class="t" style="left:1450px;top:140px;font-size:24px;color:#bbbbbb;font-family:'Liberation Sans', sans-serif;">Highlight words</div>
<svg class="a" style="left:1636px;top:146px;" width="19" height="10" viewBox="0 0 19 10"><path d="M0 0 H19 L9.5 10 Z" fill="#9a9b9c"/></svg>
<div class="a" style="left:1181px;top:130px;width:2px;height:40px;background:#515658;"></div>
<svg class="a" style="left:1695px;top:137px;" width="25" height="26" viewBox="0 0 25 26"><path d="M0 13 H25" stroke="#afb1b3" stroke-width="4"/><path d="M12.5 7.5 L19.5 0 H5.5 Z M12.5 18.5 L19.5 26 H5.5 Z" fill="#afb1b3"/></svg>
<div class="a" style="left:1737px;top:128px;width:44px;height:44px;background:#5b5f62;border-radius:5px"></div>
<svg class="a" style="left:1745px;top:135px;" width="29" height="30" viewBox="0 0 29 30"><rect x="1" y="5" width="12" height="19" fill="none" stroke="#afb1b3" stroke-width="2"/><path d="M7 5 V24" stroke="#afb1b3" stroke-width="2"/><path d="M22 5 V25" stroke="#afb1b3" stroke-width="3"/><path d="M22 0 L28 6.5 H16 Z M22 30 L28 23.5 H16 Z" fill="#afb1b3"/></svg>
<svg class="a" style="left:1798px;top:138px;" width="25" height="25" viewBox="0 0 25 25"><rect x="8.90" y="0" width="7.2" height="12.50" fill="#afb1b3" transform="rotate(0 12.5 12.5)"/><rect x="8.90" y="0" width="7.2" height="12.50" fill="#afb1b3" transform="rotate(60 12.5 12.5)"/><rect x="8.90" y="0" width="7.2" height="12.50" fill="#afb1b3" transform="rotate(120 12.5 12.5)"/><rect x="8.90" y="0" width="7.2" height="12.50" fill="#afb1b3" transform="rotate(180 12.5 12.5)"/><rect x="8.90" y="0" width="7.2" height="12.50" fill="#afb1b3" transform="rotate(240 12.5 12.5)"/><rect x="8.90" y="0" width="7.2" height="12.50" fill="#afb1b3" transform="rotate(300 12.5 12.5)"/><circle cx="12.5" cy="12.5" r="9.75" fill="#afb1b3"/><circle cx="12.5" cy="12.5" r="4.25" fill="#3c3f41"/></svg>
<svg class="a" style="left:1817px;top:163px;" width="11" height="6" viewBox="0 0 11 6"><path d="M0 0 H11 L5.5 6 Z" fill="#afb1b3"/></svg>
<div class="a" style="left:1842px;top:130px;width:2px;height:40px;background:#515658;"></div>
<div class="t" style="left:1866px;top:135px;font-size:32px;color:#afb1b3;font-family:'Liberation Sans', sans-serif;font-weight:normal;-webkit-text-stroke:0.6px #afb1b3">?</div>
<div class="t" style="left:2606px;top:140px;font-size:24px;color:#bbbbbb;font-family:'Liberation Sans', sans-serif;">1 difference</div>
<svg class="a" style="left:719px;top:183px;" width="17" height="22" viewBox="0 0 17 22"><rect x="0" y="10" width="17" height="12" fill="#afb1b3"/><path d="M3.5 11 V7 A5 5 0 0 1 13.5 7 V11" fill="none" stroke="#afb1b3" stroke-width="3"/></svg>
<div class="t" style="left:744px;top:184px;font-size:24px;color:#bbbbbb;font-family:'Liberation Sans', sans-serif;transform:scaleX(0.959);transform-origin:0 0;">Expected</div>
<svg class="a" style="left:1759px;top:183px;" width="17" height="22" viewBox="0 0 17 22"><rect x="0" y="10" width="17" height="12" fill="#afb1b3"/><path d="M3.5 11 V7 A5 5 0 0 1 13.5 7 V11" fill="none" stroke="#afb1b3" stroke-width="3"/></svg>
<div class="t" style="left:1783px;top:184px;font-size:24px;color:#bbbbbb;font-family:'Liberation Sans', sans-serif;">Actual</div>
<div class="a" style="left:703px;top:214px;width:918px;height:984px;background:#2b2b2b;"></div>
<div class="a" style="left:739px;top:258px;width:881px;height:44px;background:#353535;"></div>
<div class="a" style="left:703px;top:258px;width:28px;height:4px;background:#657382;"></div>
<div class="a" style="left:1620px;top:214px;width:2px;height:984px;background:#4a4b4c;"></div>
<div class="a" style="left:1622px;top:214px;width:203px;height:984px;background:#313335;"></div>
<svg class="a" style="left:1622px;top:256px;" width="203" height="46" viewBox="0 0 203 46"><path d="M0 2 H80 C95 2 105 2 118 0 H202 V4 H120 C110 4 105 8 95 24 C85 40 82 46 70 46 H0 Z" fill="#464747"/></svg>
<div class="a" style="left:1824px;top:214px;width:2px;height:984px;background:#4a4b4c;"></div>
<div class="a" style="left:1826px;top:214px;width:906px;height:984px;background:#2b2b2b;"></div>
<div class="a" style="left:1827px;top:256px;width:905px;height:4px;background:#464646;"></div>
<div class="a" style="left:2713px;top:214px;width:19px;height:4px;background:#657382;"></div>
<div class="t" style="left:740px;top:224px;font-size:29px;color:#a9b7c6;font-family:'Liberation Mono', monospace;letter-spacing:-1.4px;">Type a sentence to decrypt: HELLO</div>
<div class="a" style="left:1268px;top:218px;width:3px;height:35px;background:#bbbbbb;"></div>
<div class="t" style="left:1838px;top:224px;font-size:29px;color:#a9b7c6;font-family:'Liberation Mono', monospace;letter-spacing:-1.4px;">Type a sentence to decrypt: HELLO</div>
<div class="t" style="left:1676px;top:224px;font-size:29px;color:#a4a3a3;font-family:'Liberation Mono', monospace;">1</div>
<div class="t" style="left:1752px;top:224px;font-size:29px;color:#a4a3a3;font-family:'Liberation Mono', monospace;">1</div>
<div class="t" style="left:1676px;top:268px;font-size:29px;color:#606366;font-family:'Liberation Mono', monospace;">2</div>
<div class="a" style="left:701px;top:68px;width:2px;height:1130px;background:#313131;"></div>
<div class="a" style="left:0px;top:1198px;width:2732px;height:2px;background:#313131;"></div>
<div class="a" style="left:8px;top:1200px;width:2724px;height:52px;background:#3c3f41;"></div>
<div class="t" style="left:22px;top:1216px;font-size:24px;color:#bbbbbb;font-family:'Liberation Sans', sans-serif;transform:scaleX(0.958);transform-origin:0 0;">Run:</div>
<svg class="a" style="left:111px;top:1216px;" width="25" height="20" viewBox="0 0 25 20"><path d="M10 0 L0 10 L10 20 Z" fill="#a8592c"/><path d="M14 0 L24 10 L14 20 Z" fill="#4e8c40"/></svg>
<div class="t" style="left:147px;top:1216px;font-size:24px;color:#bbbbbb;font-family:'Liberation Sans', sans-serif;transform:scaleX(0.962);transform-origin:0 0;">C Tests</div>
<svg class="a" style="left:237px;top:1221px;" width="15" height="15" viewBox="0 0 15 15"><path d="M1 1 L14 14 M14 1 L1 14" stroke="#62676a" stroke-width="2"/></svg>
<svg class="a" style="left:2650px;top:1213px;" width="26" height="26" viewBox="0 0 26 26"><rect x="9.40" y="0" width="7.2" height="13.00" fill="#afb1b3" transform="rotate(0 13.0 13.0)"/><rect x="9.40" y="0" width="7.2" height="13.00" fill="#afb1b3" transform="rotate(60 13.0 13.0)"/><rect x="9.40" y="0" width="7.2" height="13.00" fill="#afb1b3" transform="rotate(120 13.0 13.0)"/><rect x="9.40" y="0" width="7.2" height="13.00" fill="#afb1b3" transform="rotate(180 13.0 13.0)"/><rect x="9.40" y="0" width="7.2" height="13.00" fill="#afb1b3" transform="rotate(240 13.0 13.0)"/><rect x="9.40" y="0" width="7.2" height="13.00" fill="#afb1b3" transform="rotate(300 13.0 13.0)"/><circle cx="13.0" cy="13.0" r="10.14" fill="#afb1b3"/><circle cx="13.0" cy="13.0" r="4.42" fill="#3c3f41"/></svg>
<div class="a" style="left:2703px;top:1224px;width:25px;height:4px;background:#afb1b3;"></div>
<div class="a" style="left:8px;top:1251px;width:2724px;height:2px;background:#323232;"></div>
<div class="a" style="left:83px;top:1248px;width:192px;height:6px;background:#747a80;"></div>
<div class="a" style="left:8px;top:1253px;width:2724px;height:57px;background:#3c3f41;"></div>
<svg class="a" style="left:29px;top:1272px;" width="21" height="23" viewBox="0 0 21 23"><path d="M0 0 L21 11.5 L0 23 Z" fill="#499c54"/></svg>
<div class="a" style="left:75px;top:1260px;width:44px;height:43px;background:#595c5e;border-radius:4px"></div>
<div class="a" style="left:127px;top:1260px;width:44px;height:43px;background:#595c5e;border-radius:4px"></div>
<svg class="a" style="left:84px;top:1271px;" width="26" height="20" viewBox="0 0 26 20"><path d="M2 10 L9 17 L24 3" fill="none" stroke="#afb1b3" stroke-width="4"/></svg>
<svg class="a" style="left:136px;top:1269px;" width="26" height="26" viewBox="0 0 26 26"><circle cx="13" cy="13" r="10.5" fill="none" stroke="#afb1b3" stroke-width="3"/><path d="M6 20 L20 6" stroke="#afb1b3" stroke-width="3"/></svg>
<div class="a" style="left:181px;top:1262px;width:2px;height:40px;background:#515658;"></div>
<svg class="a" style="left:201px;top:1268px;" width="27" height="27" viewBox="0 0 27 27"><path d="M8 0 V18" stroke="#afb1b3" stroke-width="3.5"/><path d="M0 16 H16 L8 24 Z" fill="#afb1b3"/><text x="21" y="12" font-family="Liberation Sans" font-size="15" font-weight="bold" fill="#afb1b3" text-anchor="middle">a</text><text x="21" y="27" font-family="Liberation Sans" font-size="15" font-weight="bold" fill="#afb1b3" text-anchor="middle">z</text></svg>
<svg class="a" style="left:253px;top:1268px;" width="30" height="27" viewBox="0 0 30 27"><path d="M8 0 V18" stroke="#afb1b3" stroke-width="3.5"/><path d="M0 16 H16 L8 24 Z" fill="#afb1b3"/><path d="M14 2.5 H29 M18 11 H29 M23 19.5 H29" stroke="#afb1b3" stroke-width="3.5"/></svg>
<div class="a" style="left:299px;top:1262px;width:2px;height:40px;background:#515658;"></div>
<svg class="a" style="left:321px;top:1268px;" width="25" height="28" viewBox="0 0 25 28"><path d="M0 2 H25 M0 26 H25" stroke="#afb1b3" stroke-width="3"/><path d="M12.5 6 L20 12 H5 Z M12.5 22 L20 16 H5 Z" fill="#afb1b3"/></svg>
<svg class="a" style="left:373px;top:1268px;" width="25" height="28" viewBox="0 0 25 28"><path d="M0 14 H25" stroke="#afb1b3" stroke-width="3"/><path d="M12.5 10 L20 3 H5 Z M12.5 18 L20 25 H5 Z" fill="#afb1b3"/></svg>
<div class="a" style="left:417px;top:1262px;width:2px;height:40px;background:#515658;"></div>
<svg class="a" style="left:441px;top:1268px;" width="20" height="26" viewBox="0 0 20 26"><path d="M10 3 V26 M1 11 L10 2 L19 11" fill="none" stroke="#5a5c5e" stroke-width="3"/></svg>
<svg class="a" style="left:493px;top:1268px;" width="20" height="26" viewBox="0 0 20 26"><path d="M10 0 V23 M1 15 L10 24 L19 15" fill="none" stroke="#afb1b3" stroke-width="3"/></svg>
<svg class="a" style="left:576px;top:1275px;" width="15" height="12" viewBox="0 0 15 12"><path d="M1 1 L6 6 L1 11 M8 1 L13 6 L8 11" fill="none" stroke="#afb1b3" stroke-width="2"/></svg>
<svg class="a" style="left:610px;top:1267px;" width="26" height="26" viewBox="0 0 26 26"><circle cx="13" cy="13" r="13" fill="#f0a732"/><path d="M7.5 7.5 L18.5 18.5 M18.5 7.5 L7.5 18.5" stroke="#3a3a3a" stroke-width="3.2"/></svg>
<div class="t" style="left:646px;top:1270px;font-size:24px;color:#e06c69;font-family:'Liberation Sans', sans-serif;transform:scaleX(0.975);transform-origin:0 0;">Tests failed: 8</div>
<div class="t" style="left:790px;top:1270px;font-size:24px;color:#bbbbbb;font-family:'Liberation Sans', sans-serif;transform:scaleX(0.975);transform-origin:0 0;">, passed: 20</div>
<div class="t" style="left:918px;top:1270px;font-size:24px;color:#8c8c8c;font-family:'Liberation Sans', sans-serif;transform:scaleX(0.975);transform-origin:0 0;"> of 28 tests – 942 ms</div>
<div class="a" style="left:8px;top:1310px;width:2677px;height:2px;background:#2b2b2b;"></div>
<div class="a" style="left:8px;top:1312px;width:57px;height:1542px;background:#3c3f41;"></div>
<div class="a" style="left:65px;top:1253px;width:1px;height:1601px;background:#323232;"></div>
<svg class="a" style="left:23px;top:1319px;" width="31" height="30" viewBox="0 0 31 30"><circle cx="18.3" cy="12.7" r="12" fill="#c75450"/><rect x="16" y="4.8" width="4" height="7.5" fill="#3c3f41"/><rect x="14" y="17" width="6" height="3.6" fill="#3c3f41"/><path d="M0 8.9 L13.8 18.9 L0 28.8 Z" fill="#499c54" stroke="#3c3f41" stroke-width="1.5"/></svg>
<svg class="a" style="left:25px;top:1370px;" width="25" height="32" viewBox="0 0 25 32"><path d="M5 10 A10 10 0 0 1 22 9" fill="none" stroke="#afb1b3" stroke-width="3"/><path d="M20 22 A10 10 0 0 1 3 23" fill="none" stroke="#afb1b3" stroke-width="3"/><path d="M2 2 L9 9 H2 Z M23 30 L16 23 H23 Z" fill="#afb1b3"/><rect x="1" y="12" width="7" height="7" fill="none" stroke="#afb1b3" stroke-width="2"/><rect x="17" y="12" width="7" height="7" fill="none" stroke="#afb1b3" stroke-width="2"/></svg>
<svg class="a" style="left:24px;top:1424px;" width="28" height="29" viewBox="0 0 28 29"><path d="M2 26 L14 14" stroke="#afb1b3" stroke-width="5"/><path d="M12 10 A8 8 0 0 1 24 2 L19 8 L21 11 L26 6 A8 8 0 0 1 16 16 Z" fill="#afb1b3"/></svg>
<div class="a" style="left:17px;top:1471px;width:40px;height:2px;background:#515658;"></div>
<div class="a" style="left:27px;top:1494px;width:21px;height:21px;background:#585a5c;"></div>
<svg class="a" style="left:23px;top:1545px;" width="29" height="24" viewBox="0 0 29 24"><path d="M0 5 H7 L10 0 H19 L22 5 H29 V24 H0 Z" fill="#5a5c5e"/><circle cx="14.5" cy="14" r="5.5" fill="none" stroke="#3c3f41" stroke-width="3"/></svg>
<svg class="a" style="left:25px;top:1593px;" width="29" height="32" viewBox="0 0 29 32"><path d="M6 1 L10 6 M18 1 L14 6" stroke="#5a5c5e" stroke-width="3"/><ellipse cx="12" cy="16" rx="8" ry="10" fill="#5a5c5e"/><path d="M0 12 H24 M0 19 H24" stroke="#5a5c5e" stroke-width="3"/><path d="M16 30 L28 18 M20 18 H28 V26" fill="none" stroke="#5a5c5e" stroke-width="3"/></svg>
<svg class="a" style="left:23px;top:1646px;" width="29" height="28" viewBox="0 0 29 28"><path d="M8 2 H27 V26 H8 V19 M8 9 V2" fill="none" stroke="#5a5c5e" stroke-width="3"/><path d="M0 14 H14" stroke="#5a5c5e" stroke-width="3"/><path d="M12 8 L19 14 L12 20 Z" fill="#5a5c5e"/></svg>
<div class="a" style="left:17px;top:1693px;width:40px;height:2px;background:#515658;"></div>
<svg class="a" style="left:25px;top:1716px;" width="25" height="21" viewBox="0 0 25 21"><rect x="0" y="0" width="11" height="9" fill="#afb1b3"/><rect x="13" y="0" width="11" height="9" fill="#afb1b3"/><rect x="0" y="12" width="24" height="9" fill="#afb1b3"/></svg>
<div class="a" style="left:17px;top:1758px;width:40px;height:2px;background:#515658;"></div>
<svg class="a" style="left:22px;top:1777px;" width="30" height="30" viewBox="0 0 30 30"><path d="M16 2 L28 14 L22 16 L18 22 L8 12 L14 8 Z" fill="#afb1b3"/><path d="M1 29 L12 18" stroke="#afb1b3" stroke-width="3"/></svg>
<div class="a" style="left:66px;top:1312px;width:535px;height:1542px;background:#3c3f41;"></div>
<svg class="a" style="left:151px;top:1316px;" width="14" height="20" viewBox="0 0 14 20"><path d="M2 1 L11 10 L2 19" fill="none" stroke="#afb1b3" stroke-width="2.6"/></svg>
<svg class="a" style="left:186px;top:1315px;" width="27" height="22" viewBox="0 0 27 22"><path d="M3.5 11 L10.5 18 L24 4.5" fill="none" stroke="#599a47" stroke-width="5.5"/></svg>
<div class="a" style="left:221px;top:1312px;width:282px;height:32px;overflow:hidden"><div class="t" style="left:0;top:4px;font-size:24px;color:#bbbbbb;transform:scaleX(0.95);transform-origin:0 0">Test splitBySpaces(String)</div></div>
<div class="t" style="left:364px;top:1316px;font-size:24px;color:#8c8c8c;width:200px;text-align:right;transform:scaleX(0.9);transform-origin:100% 0">37 ms</div>
<svg class="a" style="left:151px;top:1356px;" width="14" height="20" viewBox="0 0 14 20"><path d="M2 1 L11 10 L2 19" fill="none" stroke="#afb1b3" stroke-width="2.6"/></svg>
<svg class="a" style="left:186px;top:1355px;" width="27" height="22" viewBox="0 0 27 22"><path d="M3.5 11 L10.5 18 L24 4.5" fill="none" stroke="#599a47" stroke-width="5.5"/></svg>
<div class="a" style="left:221px;top:1352px;width:294px;height:32px;overflow:hidden"><div class="t" style="left:0;top:4px;font-size:24px;color:#bbbbbb;transform:scaleX(0.95);transform-origin:0 0">Test putTogetherWithSpaces(String[])</div></div>
<div class="t" style="left:364px;top:1356px;font-size:24px;color:#8c8c8c;width:200px;text-align:right;transform:scaleX(0.9);transform-origin:100% 0">7 ms</div>
<svg class="a" style="left:151px;top:1396px;" width="14" height="20" viewBox="0 0 14 20"><path d="M2 1 L11 10 L2 19" fill="none" stroke="#afb1b3" stroke-width="2.6"/></svg>
<svg class="a" style="left:186px;top:1395px;" width="27" height="22" viewBox="0 0 27 22"><path d="M3.5 11 L10.5 18 L24 4.5" fill="none" stroke="#599a47" stroke-width="5.5"/></svg>
<div class="a" style="left:221px;top:1392px;width:282px;height:32px;overflow:hidden"><div class="t" style="left:0;top:4px;font-size:24px;color:#bbbbbb;transform:scaleX(0.95);transform-origin:0 0">Test putTogetherWithSpaces(String[], int)</div></div>
<div class="t" style="left:364px;top:1396px;font-size:24px;color:#8c8c8c;width:200px;text-align:right;transform:scaleX(0.9);transform-origin:100% 0">10 ms</div>
<svg class="a" style="left:151px;top:1436px;" width="14" height="20" viewBox="0 0 14 20"><path d="M2 1 L11 10 L2 19" fill="none" stroke="#afb1b3" stroke-width="2.6"/></svg>
<svg class="a" style="left:186px;top:1435px;" width="27" height="22" viewBox="0 0 27 22"><path d="M3.5 11 L10.5 18 L24 4.5" fill="none" stroke="#599a47" stroke-width="5.5"/></svg>
<div class="a" style="left:221px;top:1432px;width:294px;height:32px;overflow:hidden"><div class="t" style="left:0;top:4px;font-size:24px;color:#bbbbbb;transform:scaleX(0.95);transform-origin:0 0">Test howManyWordsIn</div></div>
<div class="t" style="left:364px;top:1436px;font-size:24px;color:#8c8c8c;width:200px;text-align:right;transform:scaleX(0.9);transform-origin:100% 0">7 ms</div>
<svg class="a" style="left:149px;top:1478px;" width="20" height="14" viewBox="0 0 20 14"><path d="M1 2 L10 11 L19 2" fill="none" stroke="#afb1b3" stroke-width="2.6"/></svg>
<svg class="a" style="left:186px;top:1473px;" width="26" height="26" viewBox="0 0 26 26"><circle cx="13" cy="13" r="13" fill="#c4933b"/><path d="M6.5 6.5 L19.5 19.5 M19.5 6.5 L6.5 19.5" stroke="#3c3f41" stroke-width="2.6"/></svg>
<div class="a" style="left:221px;top:1472px;width:268px;height:32px;overflow:hidden"><div class="t" style="left:0;top:4px;font-size:24px;color:#bbbbbb;transform:scaleX(0.95);transform-origin:0 0">Test main()</div></div>
<div class="t" style="left:364px;top:1476px;font-size:24px;color:#8c8c8c;width:200px;text-align:right;transform:scaleX(0.9);transform-origin:100% 0">375 ms</div>
<svg class="a" style="left:222px;top:1513px;" width="26" height="26" viewBox="0 0 26 26"><circle cx="13" cy="13" r="13" fill="#c4933b"/><path d="M6.5 6.5 L19.5 19.5 M19.5 6.5 L6.5 19.5" stroke="#3c3f41" stroke-width="2.6"/></svg>
<div class="a" style="left:258px;top:1512px;width:245px;height:32px;overflow:hidden"><div class="t" style="left:0;top:4px;font-size:24px;color:#bbbbbb;transform:scaleX(0.95);transform-origin:0 0">[1] HELLO, [HELLO]</div></div>
<div class="t" style="left:364px;top:1516px;font-size:24px;color:#8c8c8c;width:200px;text-align:right;transform:scaleX(0.9);transform-origin:100% 0">73 ms</div>
<svg class="a" style="left:222px;top:1553px;" width="26" height="26" viewBox="0 0 26 26"><circle cx="13" cy="13" r="13" fill="#c4933b"/><path d="M6.5 6.5 L19.5 19.5 M19.5 6.5 L6.5 19.5" stroke="#3c3f41" stroke-width="2.6"/></svg>
<div class="a" style="left:258px;top:1552px;width:245px;height:32px;overflow:hidden"><div class="t" style="left:0;top:4px;font-size:24px;color:#bbbbbb;transform:scaleX(0.95);transform-origin:0 0">[2] FYYFHP FY IFBS, [AT THE]</div></div>
<div class="t" style="left:364px;top:1556px;font-size:24px;color:#8c8c8c;width:200px;text-align:right;transform:scaleX(0.9);transform-origin:100% 0">42 ms</div>
<svg class="a" style="left:222px;top:1593px;" width="26" height="26" viewBox="0 0 26 26"><circle cx="13" cy="13" r="13" fill="#c4933b"/><path d="M6.5 6.5 L19.5 19.5 M19.5 6.5 L6.5 19.5" stroke="#3c3f41" stroke-width="2.6"/></svg>
<div class="a" style="left:258px;top:1592px;width:245px;height:32px;overflow:hidden"><div class="t" style="left:0;top:4px;font-size:24px;color:#bbbbbb;transform:scaleX(0.95);transform-origin:0 0">[3] AI NYUG, [GO TEAM]</div></div>
<div class="t" style="left:364px;top:1596px;font-size:24px;color:#8c8c8c;width:200px;text-align:right;transform:scaleX(0.9);transform-origin:100% 0">49 ms</div>
<svg class="a" style="left:222px;top:1633px;" width="26" height="26" viewBox="0 0 26 26"><circle cx="13" cy="13" r="13" fill="#c4933b"/><path d="M6.5 6.5 L19.5 19.5 M19.5 6.5 L6.5 19.5" stroke="#3c3f41" stroke-width="2.6"/></svg>
<div class="a" style="left:258px;top:1632px;width:245px;height:32px;overflow:hidden"><div class="t" style="left:0;top:4px;font-size:24px;color:#bbbbbb;transform:scaleX(0.95);transform-origin:0 0">[4] NK, [BY, HE, IF]</div></div>
<div class="t" style="left:364px;top:1636px;font-size:24px;color:#8c8c8c;width:200px;text-align:right;transform:scaleX(0.9);transform-origin:100% 0">26 ms</div>
<svg class="a" style="left:222px;top:1673px;" width="26" height="26" viewBox="0 0 26 26"><circle cx="13" cy="13" r="13" fill="#c4933b"/><path d="M6.5 6.5 L19.5 19.5 M19.5 6.5 L6.5 19.5" stroke="#3c3f41" stroke-width="2.6"/></svg>
<div class="a" style="left:258px;top:1672px;width:245px;height:32px;overflow:hidden"><div class="t" style="left:0;top:4px;font-size:24px;color:#bbbbbb;transform:scaleX(0.95);transform-origin:0 0">[5] EH, [OR, BE]</div></div>
<div class="t" style="left:364px;top:1676px;font-size:24px;color:#8c8c8c;width:200px;text-align:right;transform:scaleX(0.9);transform-origin:100% 0">20 ms</div>
<svg class="a" style="left:222px;top:1713px;" width="26" height="26" viewBox="0 0 26 26"><circle cx="13" cy="13" r="13" fill="#c4933b"/><path d="M6.5 6.5 L19.5 19.5 M19.5 6.5 L6.5 19.5" stroke="#3c3f41" stroke-width="2.6"/></svg>
<div class="a" style="left:258px;top:1712px;width:245px;height:32px;overflow:hidden"><div class="t" style="left:0;top:4px;font-size:24px;color:#bbbbbb;transform:scaleX(0.95);transform-origin:0 0">[6] BO, [RE, AN]</div></div>
<div class="t" style="left:364px;top:1716px;font-size:24px;color:#8c8c8c;width:200px;text-align:right;transform:scaleX(0.9);transform-origin:100% 0">18 ms</div>
<svg class="a" style="left:222px;top:1753px;" width="26" height="26" viewBox="0 0 26 26"><circle cx="13" cy="13" r="13" fill="#c4933b"/><path d="M6.5 6.5 L19.5 19.5 M19.5 6.5 L6.5 19.5" stroke="#3c3f41" stroke-width="2.6"/></svg>
<div class="a" style="left:258px;top:1752px;width:245px;height:32px;overflow:hidden"><div class="t" style="left:0;top:4px;font-size:24px;color:#bbbbbb;transform:scaleX(0.95);transform-origin:0 0">[7] DOLU PU AOL JVBYZL</div></div>
<div class="t" style="left:364px;top:1756px;font-size:24px;color:#8c8c8c;width:200px;text-align:right;transform:scaleX(0.9);transform-origin:100% 0">72 ms</div>
<svg class="a" style="left:222px;top:1793px;" width="26" height="26" viewBox="0 0 26 26"><circle cx="13" cy="13" r="13" fill="#c4933b"/><path d="M6.5 6.5 L19.5 19.5 M19.5 6.5 L6.5 19.5" stroke="#3c3f41" stroke-width="2.6"/></svg>
<div class="a" style="left:258px;top:1792px;width:245px;height:32px;overflow:hidden"><div class="t" style="left:0;top:4px;font-size:24px;color:#bbbbbb;transform:scaleX(0.95);transform-origin:0 0">[8] RZ OCZ KZJKGZ JA OVVB</div></div>
<div class="t" style="left:364px;top:1796px;font-size:24px;color:#8c8c8c;width:200px;text-align:right;transform:scaleX(0.9);transform-origin:100% 0">75 ms</div>
<div class="a" style="left:583px;top:1484px;width:15px;height:368px;background:#4e5154;"></div>
<div class="a" style="left:69px;top:1836px;width:52px;height:16px;background:#5a5c5e;"></div>
<div class="a" style="left:601px;top:1312px;width:2px;height:1542px;background:#313335;"></div>
<div class="a" style="left:603px;top:1312px;width:2082px;height:1542px;background:#2b2b2b;overflow:hidden">
<div class="a" style="left:26.0px;top:0.0px;width:816.0px;height:43.9px;background:#393939"></div>
<div class="t m" style="left:26px;top:10.3px;font-size:29px;letter-spacing:-1.4px"><span style="color:#8c8c8c">&quot;C:\Program Files\Java\jdk-17.0.1\bin\java.exe&quot; ...</span></div>
<div class="t m" style="left:26px;top:54.2px;font-size:29px;letter-spacing:-1.4px"><span style="color:#bbbbbb">Type a sentence to decrypt: HELLO</span></div>
<div class="t m" style="left:26px;top:98.1px;font-size:29px;letter-spacing:-1.4px"><span style="color:#ff6b68">org.opentest4j.AssertionFailedError:</span></div>
<div class="t m" style="left:26px;top:142.0px;font-size:29px;letter-spacing:-1.4px"><span style="color:#589df6;text-decoration:underline;text-decoration-thickness:2px;text-underline-offset:4px">&lt;Click to see difference&gt;</span></div>
<div class="a" style="left:26.0px;top:219.5px;width:304.0px;height:43.9px;background:#393939"></div>
<svg class="a" style="left:5px;top:235.0px" width="19" height="19" viewBox="0 0 19 19"><rect x="1" y="1" width="17" height="17" fill="none" stroke="#5a5c5e" stroke-width="2"/><path d="M5 9.5 H14 M9.5 5 V14" stroke="#5a5c5e" stroke-width="2"/></svg>
<div class="t m" style="left:26px;top:229.8px;font-size:29px;letter-spacing:-1.4px"><span style="color:#8c8c8c"> &lt;5 internal lines&gt;</span></div>
<div class="a" style="left:1610.0px;top:263.4px;width:320.0px;height:43.9px;background:#393939"></div>
<svg class="a" style="left:5px;top:278.9px" width="19" height="19" viewBox="0 0 19 19"><rect x="1" y="1" width="17" height="17" fill="none" stroke="#5a5c5e" stroke-width="2"/><path d="M5 9.5 H14 M9.5 5 V14" stroke="#5a5c5e" stroke-width="2"/></svg>
<div class="t m" style="left:26px;top:273.7px;font-size:29px;letter-spacing:-1.4px"><span style="color:#ff6b68">    at edu.caltech.cs2.project01.CaesarCipherSolverTests.testMain(</span><span style="color:#589df6;text-decoration:underline;text-decoration-thickness:2px;text-underline-offset:4px">CaesarCipherSolverTests.java:192</span><span style="color:#ff6b68">)</span><span style="color:#8c8c8c"> &lt;35 internal lines&gt;</span></div>
<div class="a" style="left:1434.0px;top:307.3px;width:304.0px;height:43.9px;background:#393939"></div>
<svg class="a" style="left:5px;top:322.8px" width="19" height="19" viewBox="0 0 19 19"><rect x="1" y="1" width="17" height="17" fill="none" stroke="#5a5c5e" stroke-width="2"/><path d="M5 9.5 H14 M9.5 5 V14" stroke="#5a5c5e" stroke-width="2"/></svg>
<div class="t m" style="left:26px;top:317.6px;font-size:29px;letter-spacing:-1.4px"><span style="color:#ff6b68">    at java.base/java.util.stream.ForEachOps$ForEachOp$OfRef.accept(</span><span style="color:#8c8c8c;text-decoration:underline;text-decoration-thickness:2px;text-underline-offset:4px">ForEachOps.java:183</span><span style="color:#ff6b68">)</span><span style="color:#8c8c8c"> &lt;3 internal lines&gt;</span></div>
<div class="a" style="left:1434.0px;top:351.2px;width:304.0px;height:43.9px;background:#393939"></div>
<svg class="a" style="left:5px;top:366.7px" width="19" height="19" viewBox="0 0 19 19"><rect x="1" y="1" width="17" height="17" fill="none" stroke="#5a5c5e" stroke-width="2"/><path d="M5 9.5 H14 M9.5 5 V14" stroke="#5a5c5e" stroke-width="2"/></svg>
<div class="t m" style="left:26px;top:361.5px;font-size:29px;letter-spacing:-1.4px"><span style="color:#ff6b68">    at java.base/java.util.stream.ForEachOps$ForEachOp$OfRef.accept(</span><span style="color:#8c8c8c;text-decoration:underline;text-decoration-thickness:2px;text-underline-offset:4px">ForEachOps.java:183</span><span style="color:#ff6b68">)</span><span style="color:#8c8c8c"> &lt;4 internal lines&gt;</span></div>
<div class="a" style="left:1434.0px;top:395.1px;width:304.0px;height:43.9px;background:#393939"></div>
<svg class="a" style="left:5px;top:410.6px" width="19" height="19" viewBox="0 0 19 19"><rect x="1" y="1" width="17" height="17" fill="none" stroke="#5a5c5e" stroke-width="2"/><path d="M5 9.5 H14 M9.5 5 V14" stroke="#5a5c5e" stroke-width="2"/></svg>
<div class="t m" style="left:26px;top:405.4px;font-size:29px;letter-spacing:-1.4px"><span style="color:#ff6b68">    at java.base/java.util.stream.ForEachOps$ForEachOp$OfRef.accept(</span><span style="color:#8c8c8c;text-decoration:underline;text-decoration-thickness:2px;text-underline-offset:4px">ForEachOps.java:183</span><span style="color:#ff6b68">)</span><span style="color:#8c8c8c"> &lt;9 internal lines&gt;</span></div>
<div class="t m" style="left:26px;top:449.3px;font-size:29px;letter-spacing:-1.4px"><span style="color:#ff6b68">    at java.base/java.util.stream.ForEachOps$ForEachOp.evaluateSequential(</span><span style="color:#8c8c8c;text-decoration:underline;text-decoration-thickness:2px;text-underline-offset:4px">ForEachOps.java:150</span><span style="color:#ff6b68">)</span></div>
<div class="a" style="left:1626.0px;top:482.9px;width:288.0px;height:43.9px;background:#393939"></div>
<svg class="a" style="left:5px;top:498.4px" width="19" height="19" viewBox="0 0 19 19"><rect x="1" y="1" width="17" height="17" fill="none" stroke="#5a5c5e" stroke-width="2"/><path d="M5 9.5 H14 M9.5 5 V14" stroke="#5a5c5e" stroke-width="2"/></svg>
<div class="t m" style="left:26px;top:493.2px;font-size:29px;letter-spacing:-1.4px"><span style="color:#ff6b68">    at java.base/java.util.stream.ForEachOps$ForEachOp$OfRef.evaluateSequential(</span><span style="color:#8c8c8c;text-decoration:underline;text-decoration-thickness:2px;text-underline-offset:4px">ForEachOps.java:173</span><span style="color:#ff6b68">)</span><span style="color:#8c8c8c"> &lt;1 internal line&gt;</span></div>
<div class="a" style="left:1418.0px;top:526.8px;width:304.0px;height:43.9px;background:#393939"></div>
<svg class="a" style="left:5px;top:542.3px" width="19" height="19" viewBox="0 0 19 19"><rect x="1" y="1" width="17" height="17" fill="none" stroke="#5a5c5e" stroke-width="2"/><path d="M5 9.5 H14 M9.5 5 V14" stroke="#5a5c5e" stroke-width="2"/></svg>
<div class="t m" style="left:26px;top:537.1px;font-size:29px;letter-spacing:-1.4px"><span style="color:#ff6b68">    at java.base/java.util.stream.ReferencePipeline.forEach(</span><span style="color:#8c8c8c;text-decoration:underline;text-decoration-thickness:2px;text-underline-offset:4px">ReferencePipeline.java:596</span><span style="color:#ff6b68">)</span><span style="color:#8c8c8c"> &lt;4 internal lines&gt;</span></div>
<div class="a" style="left:28px;top:524px;width:602px;height:15px;background:#4d4d4d"></div>
<div class="a" style="left:2062px;top:2px;width:16px;height:52px;background:#4d4d4d"></div>
</div>
<div class="a" style="left:2685px;top:1312px;width:47px;height:1542px;background:#3c3f41;"></div>
<svg class="a" style="left:2702px;top:1327px;" width="22" height="25" viewBox="0 0 22 25"><path d="M11 3 V25 M1.5 11 L11 1.5 L20.5 11" fill="none" stroke="#afb1b3" stroke-width="3.4"/></svg>
<svg class="a" style="left:2702px;top:1380px;" width="22" height="25" viewBox="0 0 22 25"><path d="M11 0 V22 M1.5 14 L11 23.5 L20.5 14" fill="none" stroke="#afb1b3" stroke-width="3.4"/></svg>
<svg class="a" style="left:2701px;top:1431px;" width="27" height="28" viewBox="0 0 27 28"><path d="M0 2 H25 M0 11 H18 A6 6 0 0 1 18 23 H12" fill="none" stroke="#afb1b3" stroke-width="3"/><rect x="0" y="19" width="6" height="4" fill="#afb1b3"/><path d="M8 23 L15 17 V28 Z" fill="#afb1b3"/></svg>
<svg class="a" style="left:2701px;top:1481px;" width="27" height="26" viewBox="0 0 27 26"><path d="M0 3 H8 M0 12 H8 M0 23 H25" stroke="#afb1b3" stroke-width="3"/><path d="M18 0 V15 M11 10 L18 17 L25 10" fill="none" stroke="#afb1b3" stroke-width="3"/></svg>
<svg class="a" style="left:2699px;top:1535px;" width="29" height="28" viewBox="0 0 29 28"><rect x="6" y="0" width="17" height="6" fill="#afb1b3"/><path d="M0 8 H29 V20 H23 V27 H6 V20 H0 Z" fill="#afb1b3"/><rect x="9" y="17" width="11" height="8" fill="#3c3f41"/></svg>
<svg class="a" style="left:2702px;top:1588px;" width="23" height="32" viewBox="0 0 23 32"><rect x="7" y="0" width="9" height="4" fill="#afb1b3"/><rect x="0" y="3" width="23" height="5" rx="1" fill="#afb1b3"/><path d="M2 10 H21 L20 30 Q20 32 18 32 H5 Q3 32 3 30 Z" fill="#afb1b3"/></svg>
<div class="a" style="left:0px;top:1854px;width:2732px;height:1px;background:#2b2b2b;"></div>
<div class="a" style="left:0px;top:1855px;width:2732px;height:45px;background:#3c3f41;"></div>
<div class="a" style="left:105px;top:1856px;width:108px;height:42px;background:#2b2b2b;"></div>
<svg class="a" style="left:30px;top:1867px;" width="19" height="27" viewBox="0 0 19 27"><circle cx="4" cy="4" r="3" fill="#afb1b3"/><circle cx="4" cy="23" r="3" fill="#afb1b3"/><circle cx="15" cy="7" r="3" fill="#afb1b3"/><path d="M4 4 V23 M15 7 C15 15 4 13 4 20" fill="none" stroke="#afb1b3" stroke-width="2.5"/></svg>
<div class="t" style="left:62px;top:1868px;font-size:24px;color:#bbbbbb;font-family:'Liberation Sans', sans-serif;transform:scaleX(0.867);transform-origin:0 0;">Git</div>
<svg class="a" style="left:127px;top:1869px;" width="16" height="20" viewBox="0 0 16 20"><path d="M0 0 L16 10 L0 20 Z" fill="#afb1b3"/></svg>
<div class="t" style="left:158px;top:1868px;font-size:24px;color:#e6e6e6;font-family:'Liberation Sans', sans-serif;transform:scaleX(0.833);transform-origin:0 0;">Run</div>
<svg class="a" style="left:237px;top:1872px;" width="21" height="18" viewBox="0 0 21 18"><path d="M0 2 H4 M7 2 H21 M0 9 H4 M7 9 H21 M0 16 H4 M7 16 H21" stroke="#afb1b3" stroke-width="3"/></svg>
<div class="t" style="left:268px;top:1868px;font-size:24px;color:#bbbbbb;font-family:'Liberation Sans', sans-serif;transform:scaleX(0.868);transform-origin:0 0;">TODO</div>
<svg class="a" style="left:372px;top:1868px;" width="21" height="21" viewBox="0 0 21 21"><circle cx="10.5" cy="10.5" r="10.5" fill="#afb1b3"/><rect x="8.5" y="4" width="4" height="9" fill="#3c3f41"/><rect x="8.5" y="15" width="4" height="3" fill="#3c3f41"/></svg>
<div class="t" style="left:404px;top:1868px;font-size:24px;color:#bbbbbb;font-family:'Liberation Sans', sans-serif;transform:scaleX(0.89);transform-origin:0 0;">Problems</div>
<svg class="a" style="left:537px;top:1867px;" width="23" height="26" viewBox="0 0 23 26"><path d="M6 1 L9 5 M17 1 L14 5" stroke="#afb1b3" stroke-width="2.5"/><ellipse cx="11.5" cy="15" rx="8" ry="10" fill="#afb1b3"/><path d="M0 11 H23 M0 17 H23 M1 23 H22" stroke="#afb1b3" stroke-width="2.5"/></svg>
<div class="t" style="left:570px;top:1868px;font-size:24px;color:#bbbbbb;font-family:'Liberation Sans', sans-serif;transform:scaleX(0.913);transform-origin:0 0;">Debug</div>
<svg class="a" style="left:679px;top:1867px;" width="23" height="21" viewBox="0 0 23 21"><rect x="0" y="0" width="23" height="21" fill="#afb1b3"/><path d="M4 5 L9 9 L4 13" fill="none" stroke="#3c3f41" stroke-width="2"/><path d="M11 16 H19" stroke="#3c3f41" stroke-width="2"/></svg>
<div class="t" style="left:711px;top:1868px;font-size:24px;color:#bbbbbb;font-family:'Liberation Sans', sans-serif;transform:scaleX(0.933);transform-origin:0 0;">Terminal</div>
<svg class="a" style="left:833px;top:1866px;" width="26" height="26" viewBox="0 0 26 26"><path d="M1 7 L8 0 L13 4 L10 7 L25 22 L22 25 L7 10 L4 12 Z" fill="#afb1b3"/></svg>
<div class="t" style="left:868px;top:1868px;font-size:24px;color:#bbbbbb;font-family:'Liberation Sans', sans-serif;transform:scaleX(0.902);transform-origin:0 0;">Build</div>
<svg class="a" style="left:2548px;top:1867px;" width="25" height="25" viewBox="0 0 25 25"><circle cx="12.5" cy="12.5" r="12.5" fill="#499c54"/><text x="12.5" y="18.5" font-family="Liberation Sans" font-size="16" font-weight="bold" fill="#fff" text-anchor="middle">1</text></svg>
<div class="t" style="left:2582px;top:1868px;font-size:24px;color:#bbbbbb;font-family:'Liberation Sans', sans-serif;transform:scaleX(0.877);transform-origin:0 0;">Event Log</div>
</body></html>
